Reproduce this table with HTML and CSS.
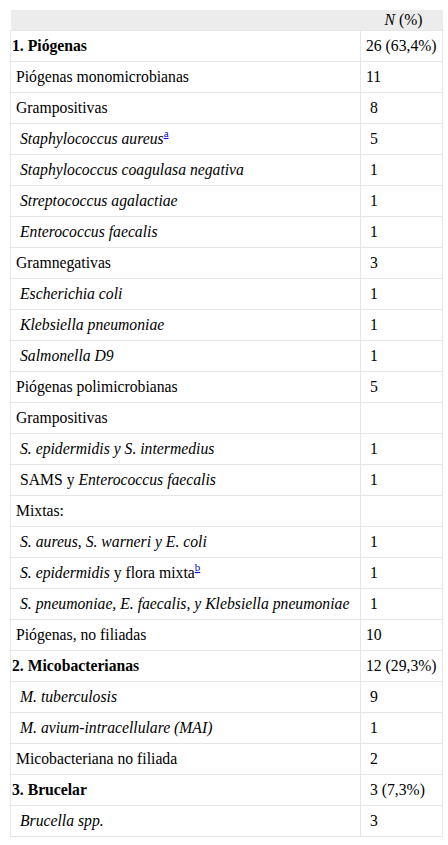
FILE: index.html
```html
<!DOCTYPE html>
<html lang="es">
<head>
<meta charset="utf-8">
<link rel="stylesheet" href="styles.css">
</head>
<body>
<table class="tbl">
<thead>
<tr><th class="c1"></th><th class="c2"><i>N</i> (%)</th></tr>
</thead>
<tbody>
<tr><td class="l0 b">1. Piógenas</td><td class="v0">26 (63,4%)</td></tr>
<tr><td class="l1">Piógenas monomicrobianas</td><td class="v0">11</td></tr>
<tr><td class="l1">Grampositivas</td><td class="v1">8</td></tr>
<tr><td class="l2"><i>Staphylococcus aureus</i><sup><a href="#a">a</a></sup></td><td class="v1">5</td></tr>
<tr><td class="l2"><i>Staphylococcus coagulasa negativa</i></td><td class="v1">1</td></tr>
<tr><td class="l2"><i>Streptococcus agalactiae</i></td><td class="v1">1</td></tr>
<tr><td class="l2"><i>Enterococcus faecalis</i></td><td class="v1">1</td></tr>
<tr><td class="l1">Gramnegativas</td><td class="v1">3</td></tr>
<tr><td class="l2"><i>Escherichia coli</i></td><td class="v1">1</td></tr>
<tr><td class="l2"><i>Klebsiella pneumoniae</i></td><td class="v1">1</td></tr>
<tr><td class="l2"><i>Salmonella D9</i></td><td class="v1">1</td></tr>
<tr><td class="l1">Piógenas polimicrobianas</td><td class="v1">5</td></tr>
<tr><td class="l1">Grampositivas</td><td class="v1"></td></tr>
<tr><td class="l2"><i>S. epidermidis y S. intermedius</i></td><td class="v1">1</td></tr>
<tr><td class="l2">SAMS y <i>Enterococcus faecalis</i></td><td class="v1">1</td></tr>
<tr><td class="l1">Mixtas:</td><td class="v1"></td></tr>
<tr><td class="l2"><i>S. aureus, S. warneri y E. coli</i></td><td class="v1">1</td></tr>
<tr><td class="l2"><i>S. epidermidis</i> y flora mixta<sup><a href="#b">b</a></sup></td><td class="v1">1</td></tr>
<tr><td class="l2"><i>S. pneumoniae, E. faecalis, y Klebsiella pneumoniae</i></td><td class="v1">1</td></tr>
<tr><td class="l1">Piógenas, no filiadas</td><td class="v0">10</td></tr>
<tr><td class="l0 b">2. Micobacterianas</td><td class="v0">12 (29,3%)</td></tr>
<tr><td class="l2"><i>M. tuberculosis</i></td><td class="v1">9</td></tr>
<tr><td class="l2"><i>M. avium-intracellulare (MAI)</i></td><td class="v1">1</td></tr>
<tr><td class="l1">Micobacteriana no filiada</td><td class="v1">2</td></tr>
<tr><td class="l0 b">3. Brucelar</td><td class="v1">3 (7,3%)</td></tr>
<tr><td class="l2"><i>Brucella spp.</i></td><td class="v1">3</td></tr>
</tbody>
</table>
</body>
</html>
```

FILE: styles.css
```css
html, body {
  margin: 0;
  padding: 0;
  background: #ffffff;
}
body {
  font-family: "Liberation Serif", "Times New Roman", serif;
  font-size: 15.7px;
  color: #000;
}
.tbl {
  margin: 10px 0 0 10px;
  width: 428px;
  border-collapse: collapse;
  table-layout: fixed;
}
.tbl th {
  background: #ececec;
  font-weight: normal;
  height: 20px;
  padding: 0;
  font-size: 15.7px;
  line-height: 18px;
  text-align: center;
  vertical-align: middle;
}
.tbl th.c1 { width: 350px; }
.tbl th.c2 { width: 78px; padding-left: 4px; }
.tbl td {
  border: 1px solid #e6e6e6;
  height: 30px;
  padding: 0;
  line-height: 18px;
  vertical-align: middle;
  white-space: nowrap;
}
.tbl td.b {
  font-weight: bold;
}
.l0 { padding-left: 1px !important; }
.l1 { padding-left: 5px !important; }
.l2 { padding-left: 9px !important; }
.v0 { padding-left: 5px !important; }
.v1 { padding-left: 9px !important; }
sup {
  font-size: 11px;
  line-height: 0;
  vertical-align: 7px;
}
sup a {
  color: #0000ee;
  text-decoration: underline;
}
```
